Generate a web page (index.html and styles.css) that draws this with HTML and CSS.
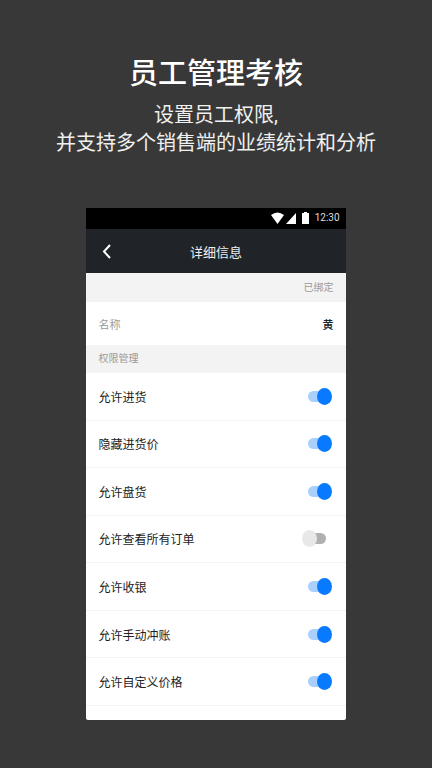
FILE: index.html
```html
<!DOCTYPE html>
<html lang="zh-CN">
<head>
  <meta charset="UTF-8">
  <meta name="viewport" content="width=device-width, initial-scale=1">
  <title>员工管理考核</title>
  <link rel="stylesheet" href="styles.css">
</head>
<body>
  <header class="intro">
    <h1>员工管理考核</h1>
    <p>设置员工权限,<br>并支持多个销售端的业绩统计和分析</p>
  </header>

  <main class="phone">
    <div class="status-bar">
      <svg width="13" height="12" viewBox="0 0 13 12" fill="#fff"><path d="M0 3Q6.500 -2 13 3L6.500 12Z"/></svg>
      <svg width="10" height="12" viewBox="0 0 10 12" fill="#fff"><path d="M10 1V12H0Z"/></svg>
      <svg class="battery" width="7" height="12" viewBox="0 0 7 12" fill="#fff"><path d="M2 0H5V1H7V12H0V1H2Z"/></svg>
      <span>12:30</span>
    </div>

    <nav class="nav-bar">
      <button type="button" class="back" aria-label="返回">
        <svg width="9" height="15" viewBox="0 0 9 15" fill="none" stroke="#fff" stroke-width="2"><path d="M8 1L2 7.500L8 14"/></svg>
      </button>
      <h2>详细信息</h2>
    </nav>

    <div class="band bound">已绑定</div>
    <div class="name-row">
      <span class="label">名称</span>
      <span class="value">黄</span>
    </div>
    <div class="band">权限管理</div>

    <div class="permissions">
      <label class="row">允许进货<input type="checkbox" class="switch" checked></label>
      <label class="row">隐藏进货价<input type="checkbox" class="switch" checked></label>
      <label class="row">允许盘货<input type="checkbox" class="switch" checked></label>
      <label class="row">允许查看所有订单<input type="checkbox" class="switch"></label>
      <label class="row">允许收银<input type="checkbox" class="switch" checked></label>
      <label class="row">允许手动冲账<input type="checkbox" class="switch" checked></label>
      <label class="row">允许自定义价格<input type="checkbox" class="switch" checked></label>
    </div>
  </main>
</body>
</html>
```
FILE: styles.css
```css
* {
  box-sizing: border-box;
}

body {
  margin: 0;
  padding: 54px 0 48px;
  background-color: #383838;
  color: #222;
  font-family: Roboto, "Noto Sans CJK SC", sans-serif;
}

h1, h2, p {
  margin: 0;
  font-weight: normal;
}

.intro {
  color: #fff;
  text-align: center;
}

.intro h1 {
  font-size: 29px;
  font-weight: 500;
  line-height: 40px;
}

.intro p {
  padding-top: 7px;
  color: #f0f0f0;
  font-size: 20px;
  line-height: 28px;
}

.phone {
  width: 60%;
  margin: 51px auto 0;
  padding-bottom: 14px;
  background-color: #fff;
  border-radius: 0 0 2px 2px;
}

.status-bar {
  display: flex;
  align-items: center;
  justify-content: flex-end;
  gap: 2px;
  height: 21px;
  padding: 0 6px 2px 0;
  background-color: #000;
  color: #ddd;
  font-size: 10px;
}

.battery {
  margin: 0 4px;
}

.nav-bar {
  display: grid;
  grid-template-columns: 40px 1fr 40px;
  align-items: center;
  height: 44px;
  background-color: #202428;
  color: #eee;
}

.nav-bar h2 {
  font-size: 13px;
  text-align: center;
}

.back {
  display: flex;
  align-items: center;
  justify-content: center;
  height: 44px;
  padding: 0;
  border: 0;
  background: none;
  cursor: pointer;
}

.band {
  padding-inline: 12px;
  background-color: #f3f3f3;
  color: #999;
  font-size: 10px;
  line-height: 28px;
}

.bound {
  padding-top: 1px;
  text-align: right;
}

.name-row {
  display: flex;
  align-items: center;
  justify-content: space-between;
  height: 43px;
  padding: 0 12px;
  font-size: 11px;
}

.label {
  color: #999;
}

.value {
  font-weight: 500;
}

.permissions {
  display: grid;
  grid-auto-rows: 1fr;
  min-height: 333px;
}

.row {
  display: flex;
  align-items: center;
  justify-content: space-between;
  padding: 0 14px 0 12px;
  border-bottom: 1px solid #f3f3f3;
  font-size: 12px;
  cursor: pointer;
}

.switch {
  appearance: none;
  display: grid;
  align-items: center;
  width: 30px;
  height: 17px;
  margin: 0;
  cursor: pointer;
}

.switch::before,
.switch::after {
  content: "";
  grid-area: 1 / 1;
}

.switch::before {
  height: 11px;
  margin: 0 6px;
  border-radius: 6px;
  background-color: #b0b0b0;
}

.switch::after {
  width: 15px;
  height: 17px;
  border-radius: 50%;
  background-color: #e8e8e8;
}

.switch:checked::before {
  background-color: #a9d0fb;
}

.switch:checked::after {
  justify-self: end;
  background-color: #077aff;
}
```
